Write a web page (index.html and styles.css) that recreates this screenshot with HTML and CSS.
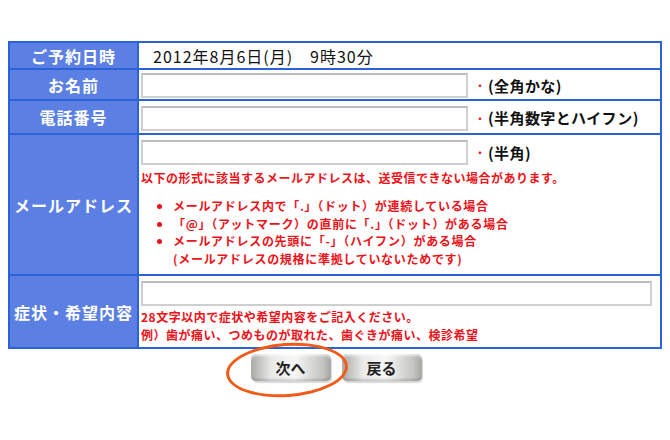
FILE: index.html
```html
<!DOCTYPE html>
<html lang="ja">
<head>
    <meta charset="UTF-8">
    <title>ご予約フォーム</title>
    <link rel="stylesheet" href="styles.css">
</head>
<body>
    <div class="page">
        <table class="reserve-form">
            <tr class="row-date">
                <th>ご予約日時</th>
                <td class="date">2012年8月6日(月)　9時30分</td>
            </tr>
            <tr class="row-name">
                <th>お名前</th>
                <td><input type="text" class="field"><span class="req">・</span><span class="note">(全角かな)</span></td>
            </tr>
            <tr class="row-tel">
                <th>電話番号</th>
                <td><input type="text" class="field"><span class="req">・</span><span class="note">(半角数字とハイフン)</span></td>
            </tr>
            <tr class="row-mail">
                <th>メールアドレス</th>
                <td>
                    <input type="text" class="field"><span class="req">・</span><span class="note">(半角)</span>
                    <p class="warn">以下の形式に該当するメールアドレスは、送受信できない場合があります。</p>
                    <ul class="warn-list">
                        <li>メールアドレス内で「.」（ドット）が連続している場合</li>
                        <li>「@」（アットマーク）の直前に「.」（ドット）がある場合</li>
                        <li>メールアドレスの先頭に「-」（ハイフン）がある場合<br>(メールアドレスの規格に準拠していないためです)</li>
                    </ul>
                </td>
            </tr>
            <tr class="row-wish">
                <th>症状・希望内容</th>
                <td>
                    <input type="text" class="field wide">
                    <p class="warn">28文字以内で症状や希望内容をご記入ください。<br>例）歯が痛い、つめものが取れた、歯ぐきが痛い、検診希望</p>
                </td>
            </tr>
        </table>

        <div class="actions">
            <div class="btn-wrap">
                <button class="btn">次へ</button>
                <div class="circle"></div>
            </div>
            <button class="btn">戻る</button>
        </div>
    </div>
</body>
</html>
```

FILE: styles.css
```css
html, body {
    min-height: 440px;
}

body {
    margin: 0;
    background: #fff;
    font-family: "Noto Sans CJK JP", "Noto Sans", sans-serif;
}

.page {
    padding: 41px 8px 60px 8px;
}

.reserve-form {
    width: 654px;
    border-collapse: collapse;
    border: 2px solid #2c62d9;
}

.reserve-form th,
.reserve-form td {
    border: 2px solid #2c62d9;
    padding: 0 2px;
}

.reserve-form th {
    width: 123px;
    background-color: #5b7fe3;
    color: #fff;
    font-size: 16px;
    font-weight: bold;
    letter-spacing: 1px;
    text-align: center;
    white-space: nowrap;
}

.reserve-form td {
    vertical-align: middle;
    color: #111;
}

.row-date td, .row-date th { height: 25px; }
.row-name td, .row-name th { height: 29px; }
.row-tel td, .row-tel th { height: 32px; }
.row-mail td, .row-mail th { height: 136px; }
.row-wish td, .row-wish th { height: 68px; }

.row-mail td,
.row-wish td {
    vertical-align: top;
    padding-top: 3px;
}

.date {
    padding-left: 14px !important;
    font-size: 16px;
    letter-spacing: 1px;
}

.field {
    width: 327px;
    height: 25px;
    box-sizing: border-box;
    border: 2px solid #cfcfcf;
    border-top-color: #bdbdbd;
    background: #fff;
    vertical-align: middle;
    margin: 0;
}

.field.wide {
    width: 511px;
}

.req {
    color: #e8141b;
    font-size: 12px;
    margin: 0 2px 0 6px;
    vertical-align: middle;
}

.note {
    font-size: 15px;
    font-weight: bold;
    letter-spacing: 0.4px;
    vertical-align: middle;
}

.warn {
    margin: 4px 0 0 0;
    color: #ee1118;
    font-size: 12px;
    font-weight: bold;
    line-height: 17px;
    letter-spacing: 0.5px;
}

.row-wish .warn {
    line-height: 18px;
    margin-top: 2px;
}

.warn-list {
    margin: 11px 0 0 0;
    padding-left: 32px;
    color: #ee1118;
    font-size: 12px;
    font-weight: bold;
    line-height: 17.5px;
    letter-spacing: 0.7px;
}

.actions {
    display: flex;
    justify-content: center;
    gap: 11px;
    margin-top: 5px;
    padding-left: 2px;
}

.btn-wrap {
    position: relative;
}

.btn {
    display: block;
    width: 80px;
    height: 27px;
    border: none;
    border-radius: 5px;
    background: linear-gradient(to right, #a9aaa6, #e9eae7 25%, #f7f7f5 55%, #c3c4c0 90%, #a5a6a2);
    box-shadow: 1px 2px 1px #d8d8d8, inset 0 -2px 2px rgba(0, 0, 0, 0.15), inset 0 2px 2px rgba(255, 255, 255, 0.6);
    font-family: "Noto Sans CJK JP", sans-serif;
    font-size: 15px;
    font-weight: bold;
    color: #222;
    padding: 0;
}

.circle {
    position: absolute;
    left: -25px;
    top: -11px;
    width: 122px;
    height: 54px;
    box-sizing: border-box;
    border: 3px solid #f25a16;
    border-radius: 50%;
    transform: rotate(-4deg);
    pointer-events: none;
}
```
